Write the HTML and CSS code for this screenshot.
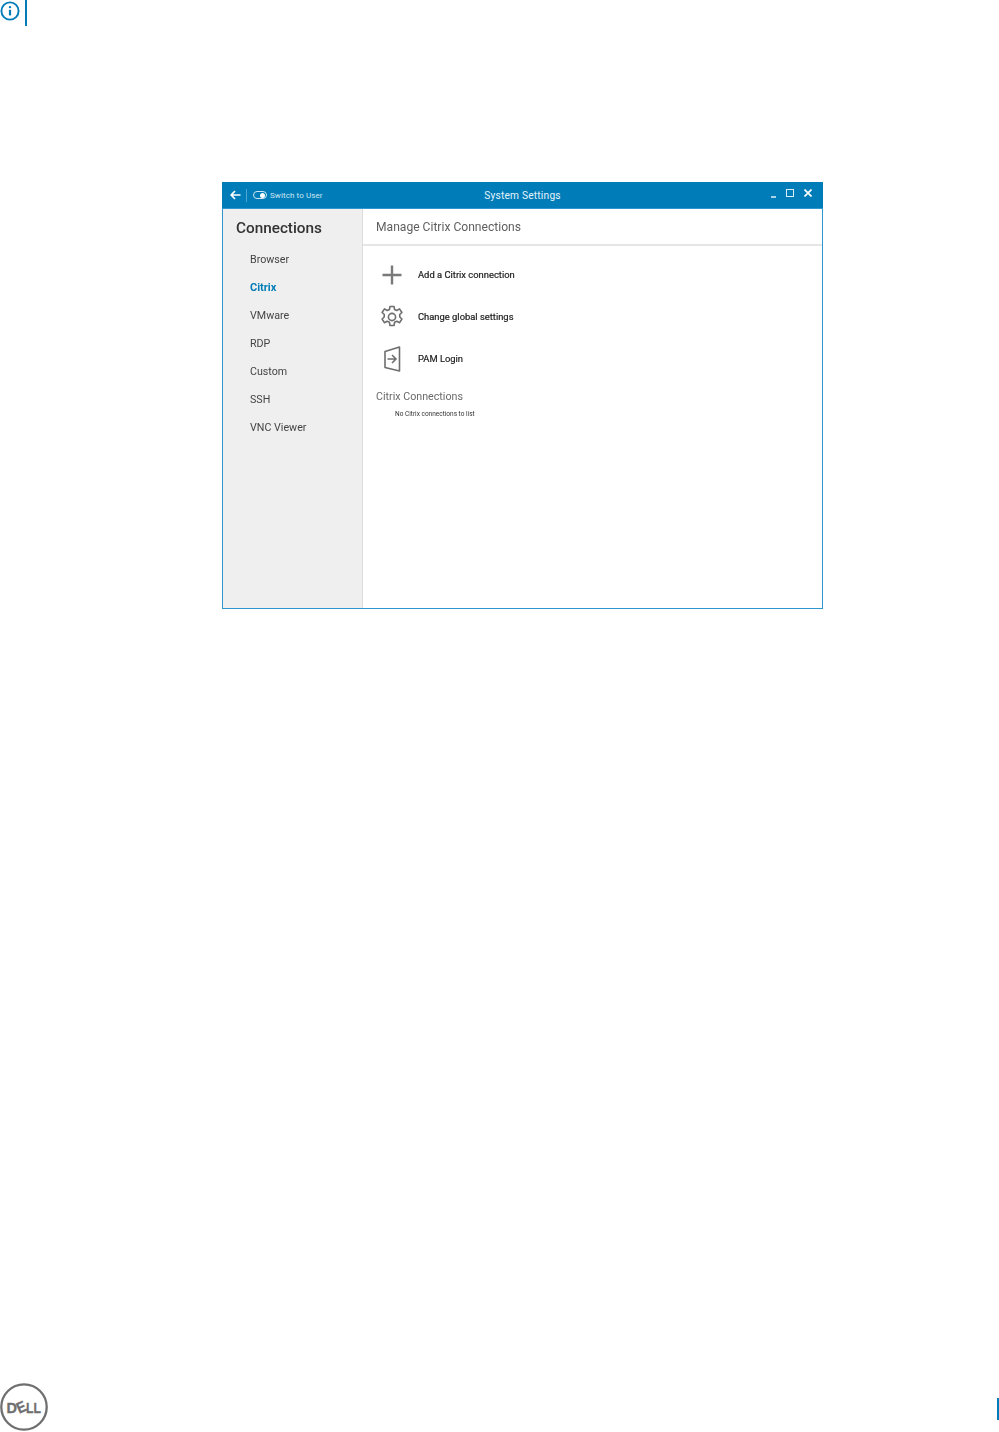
FILE: index.html
```html
<!DOCTYPE html>
<html lang="en">
<head>
<meta charset="utf-8">
<title>Manage Citrix Connections</title>
<link rel="stylesheet" href="styles.css">
</head>
<body>
<div class="page">
  <header class="note">
    <svg class="note-icon" width="20" height="20" viewBox="0 0 20 20" fill="none" stroke="#007db8">
      <circle cx="10" cy="10" r="8.600" stroke-width="1.900"/>
      <path d="M10 8.800v5.600" stroke-width="2.200"/>
      <path d="M10 5.200v1.900" stroke-width="2.200"/>
    </svg>
    <span class="note-bar"></span>
  </header>

  <main class="window">
    <div class="titlebar">
      <div class="tb-left">
        <svg class="back" width="11" height="10" viewBox="0 0 11 10" fill="none" stroke="#fff" stroke-width="1.700"><path d="M10.500 5H1.200M5 1 1.200 5 5 9"/></svg>
        <span class="tb-sep"></span>
        <span class="toggle"><span class="toggle-dot"></span></span>
        <span class="switch-label">Switch to User</span>
      </div>
      <div class="tb-title">System Settings</div>
      <div class="tb-controls">
        <span class="ctl-min"></span>
        <span class="ctl-max"></span>
        <svg class="ctl-close" width="8" height="8" viewBox="0 0 8 8" stroke="#fff" stroke-width="1.700"><path d="M.5.5l7 7M7.500.5l-7 7"/></svg>
      </div>
    </div>
    <div class="content">
      <nav class="sidebar">
        <h2 class="side-title">Connections</h2>
        <ul class="side-list">
          <li>Browser</li>
          <li class="active">Citrix</li>
          <li>VMware</li>
          <li>RDP</li>
          <li>Custom</li>
          <li>SSH</li>
          <li>VNC Viewer</li>
        </ul>
      </nav>
      <section class="panel">
        <h1 class="panel-title">Manage Citrix Connections</h1>
        <div class="actions">
          <div class="action">
            <svg class="action-icon" width="24" height="24" viewBox="0 0 24 24" fill="none" stroke="#7a7a7a" stroke-width="2.400"><path d="M12 2.500v19M2.500 12h19"/></svg>
            <span class="action-label">Add a Citrix connection</span>
          </div>
          <div class="action">
            <svg class="action-icon" width="24" height="24" viewBox="0 0 24 24" fill="none" stroke="#6e6e6e" stroke-width="1.600"><circle cx="12" cy="12" r="3.600"/><path d="M10 1.500h4l.6 3 2.200 1 2.700-1.600 2.400 3.600-2.200 2 .1 2.500 2.100 2-2.300 3.700-2.800-1.500-2.200 1.100-.6 3.200h-4l-.6-3.200-2.200-1.100-2.800 1.500-2.300-3.700 2.100-2 .1-2.500-2.200-2 2.400-3.600 2.700 1.600 2.200-1z" stroke-linejoin="round"/></svg>
            <span class="action-label">Change global settings</span>
          </div>
          <div class="action">
            <svg class="action-icon" width="24" height="26" viewBox="0 0 24 26" fill="none" stroke="#6e6e6e" stroke-width="1.600"><path d="M5 5.500 19.500 1v24L5 21.500z" stroke-linejoin="round"/><path d="M7.500 13h8M12 9l4 4-4 4"/></svg>
            <span class="action-label">PAM Login</span>
          </div>
        </div>
        <h3 class="list-title">Citrix Connections</h3>
        <p class="list-empty">No Citrix connections to list</p>
      </section>
    </div>
  </main>

  <footer class="footer">
    <svg class="logo" width="48" height="48" viewBox="0 0 48 48" fill="none">
      <circle cx="24" cy="24" r="22.700" stroke="#6f6f6f" stroke-width="2.300"/>
      <text class="logo-text" x="6.500" y="29.500" textLength="10.500" lengthAdjust="spacingAndGlyphs">D</text>
      <text class="logo-text" x="16.500" y="29.500" textLength="9" lengthAdjust="spacingAndGlyphs" transform="rotate(-24 21 24)">E</text>
      <text class="logo-text" x="26" y="29.500" textLength="7.500" lengthAdjust="spacingAndGlyphs">L</text>
      <text class="logo-text" x="33.500" y="29.500" textLength="7.500" lengthAdjust="spacingAndGlyphs">L</text>
    </svg>
    <span class="footer-bar"></span>
  </footer>
</div>
</body>
</html>
```

FILE: styles.css
```css
* { box-sizing: border-box; }
html, body { margin: 0; padding: 0; background: #fff; }
body { font-family: "Roboto", "Liberation Sans", sans-serif; color: #333; }

.page {
  width: 999px;
  height: 1432px;
  display: flex;
  flex-direction: column;
  overflow: hidden;
}

.note { display: flex; align-items: flex-start; height: 26px; flex: none; }
.note-icon { display: block; margin-top: 1px; }
.note-bar { width: 2px; height: 26px; background: #007db8; margin-left: 5px; }

.window {
  width: 601px;
  height: 427px;
  margin: 156px 0 0 222px;
  display: flex;
  flex-direction: column;
  flex: none;
  border: 1px solid #2f97cf;
  border-top: 0;
  filter: blur(0.3px);
}

.titlebar {
  height: 27px;
  flex: none;
  background: #007db8;
  color: #e6f3fa;
  margin: 0 -1px;
  display: grid;
  grid-template-columns: 1fr auto 1fr;
  align-items: center;
  border-bottom: 1px solid #2f97cf;
}
.tb-left { display: flex; align-items: center; padding-left: 8px; }
.back { display: block; }
.tb-sep { width: 1px; height: 13px; background: #4fa5d2; margin: 0 6px 0 5px; }
.toggle {
  width: 14px; height: 8px; border: 1px solid #cfe6f2; border-radius: 4px;
  display: flex; align-items: center; justify-content: flex-end; padding-right: 1px;
}
.toggle-dot { width: 5px; height: 5px; border-radius: 50%; background: #fff; }
.switch-label { font-size: 8px; margin: 1px 0 0 3px; letter-spacing: 0.100px; color: #cfe6f2; }
.tb-title { font-size: 10.200px; letter-spacing: 0.200px; }
.tb-controls { display: flex; align-items: center; justify-content: flex-end; padding: 0 11px 4px 0; }
.ctl-min { width: 5px; height: 2px; background: #a9d3e8; margin: 7px 10px 0 0; }
.ctl-max { width: 8px; height: 8px; border: 1.500px solid #dceef7; margin-right: 10px; }
.ctl-close { display: block; }

.content { flex: 1; display: flex; min-height: 0; }

.sidebar {
  width: 140px;
  flex: none;
  background: #efefef;
  border-right: 1px solid #dcdcdc;
  padding: 10px 0 0 13px;
}
.side-title { margin: 0; font-size: 15.300px; font-weight: 500; line-height: 19px; color: #333; }
.side-list { list-style: none; margin: 8px 0 0; padding: 0 0 0 14px; font-size: 10.700px; color: #444; }
.side-list li { height: 28px; line-height: 28px; }
.side-list .active { color: #007db8; font-weight: 700; font-size: 11px; }

.panel { flex: 1; display: flex; flex-direction: column; min-width: 0; }
.panel-title {
  margin: 0;
  height: 37px;
  flex: none;
  padding: 10px 0 0 13px;
  font-size: 12.100px;
  font-weight: 400;
  line-height: 17px;
  color: #5f5f5f;
  border-bottom: 2px solid #e6e6e6;
}
.actions { display: flex; flex-direction: column; padding: 8px 0 0 17px; }
.action {
  height: 42px;
  display: flex;
  align-items: center;
  gap: 14px;
  font-size: 9.400px;
  color: #222;
}
.action-label { padding-bottom: 2px; -webkit-text-stroke: 0.200px #222; }
.action-icon { display: block; flex: none; }
.list-title { margin: 10px 0 0 13px; font-size: 10.700px; font-weight: 400; line-height: 14px; color: #6a6a6a; }
.list-empty { margin: 6px 0 0 32px; font-size: 6.500px; line-height: 9px; color: #333; }

.footer {
  margin-top: auto;
  height: 49px;
  flex: none;
  display: flex;
  justify-content: space-between;
  align-items: flex-start;
  padding-bottom: 1px;
}
.logo { display: block; }
.logo-text { font-family: "Liberation Sans", sans-serif; font-size: 15.500px; font-weight: 700; fill: #6f6f6f; stroke: #6f6f6f; stroke-width: 0.300px; }
.footer-bar { width: 2px; height: 22px; background: #007db8; margin-top: 15px; }
```
